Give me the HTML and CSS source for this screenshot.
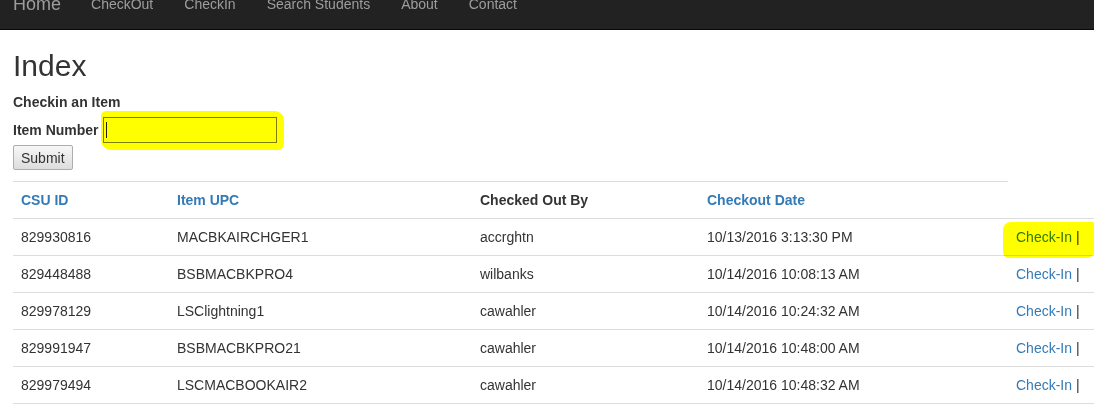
FILE: index.html
```html
<!DOCTYPE html>
<html>
<head>
<meta charset="utf-8">
<title>Index</title>
<link rel="stylesheet" href="styles.css">
</head>
<body>
<nav class="navbar">
  <a class="brand" href="#">Home</a>
  <ul class="nav">
    <li><a href="#">CheckOut</a></li>
    <li><a href="#">CheckIn</a></li>
    <li><a href="#">Search Students</a></li>
    <li><a href="#">About</a></li>
    <li><a href="#">Contact</a></li>
  </ul>
</nav>
<main class="content">
  <h2 class="title">Index</h2>
  <div class="form-title">Checkin an Item</div>
  <div class="form-row">
    <label class="form-label">Item Number</label>
    <div class="input marked-input"><span class="caret"></span></div>
  </div>
  <button class="btn" type="button">Submit</button>
  <div class="rule"></div>
  <table class="table">
    <colgroup>
      <col class="c1"><col class="c2"><col class="c3"><col class="c4"><col class="c5">
    </colgroup>
    <thead>
      <tr>
        <th><a href="#">CSU ID</a></th>
        <th><a href="#">Item UPC</a></th>
        <th>Checked Out By</th>
        <th><a href="#">Checkout Date</a></th>
        <th></th>
      </tr>
    </thead>
    <tbody>
      <tr>
        <td>829930816</td><td>MACBKAIRCHGER1</td><td>accrghtn</td><td>10/13/2016 3:13:30 PM</td>
        <td><span class="marked"><a href="#">Check-In</a> |</span></td>
      </tr>
      <tr>
        <td>829448488</td><td>BSBMACBKPRO4</td><td>wilbanks</td><td>10/14/2016 10:08:13 AM</td>
        <td><a href="#">Check-In</a> |</td>
      </tr>
      <tr>
        <td>829978129</td><td>LSClightning1</td><td>cawahler</td><td>10/14/2016 10:24:32 AM</td>
        <td><a href="#">Check-In</a> |</td>
      </tr>
      <tr>
        <td>829991947</td><td>BSBMACBKPRO21</td><td>cawahler</td><td>10/14/2016 10:48:00 AM</td>
        <td><a href="#">Check-In</a> |</td>
      </tr>
      <tr>
        <td>829979494</td><td>LSCMACBOOKAIR2</td><td>cawahler</td><td>10/14/2016 10:48:32 AM</td>
        <td><a href="#">Check-In</a> |</td>
      </tr>
    </tbody>
  </table>
</main>
</body>
</html>
```
FILE: styles.css
```css
html, body {
  margin: 0;
  padding: 0;
  background: #fff;
  overflow: hidden;
}
body {
  font-family: "Liberation Sans", Arial, Helvetica, sans-serif;
  font-size: 14px;
  line-height: 20px;
  color: #333;
  width: 1094px;
}
a {
  color: #337ab7;
  text-decoration: none;
}

/* navbar */
.navbar {
  display: flex;
  align-items: flex-start;
  height: 50px;
  margin-top: -21px;
  padding-left: 13px;
  background: #222;
  border-bottom: 1px solid #080808;
}
.brand {
  display: block;
  padding: 15px 15px 15px 0;
  font-size: 18px;
  line-height: 20px;
  color: #9d9d9d;
}
.nav {
  display: flex;
  margin: 0;
  padding: 0;
  list-style: none;
}
.nav a {
  display: block;
  padding: 15px 15.5px;
  color: #9d9d9d;
  line-height: 20px;
}
.nav li:first-child a {
  padding-left: 15px;
}

/* content */
.content {
  padding-left: 13px;
}
.title {
  margin: 19px 0 10px;
  font-size: 30px;
  line-height: 33px;
  font-weight: normal;
  color: #333;
}
.form-title {
  font-weight: bold;
}
.form-row {
  display: flex;
  align-items: center;
  margin-top: 5px;
  height: 26px;
}
.form-label {
  font-weight: bold;
  margin-right: 4px;
}
.input {
  position: relative;
  box-sizing: border-box;
  width: 174px;
  height: 26px;
  border: 1px solid #7d7d7d;
  background: #fff;
}
.caret {
  position: absolute;
  left: 2px;
  top: 4px;
  width: 1px;
  height: 16px;
  background: #222;
}
.marked-input::after {
  content: "";
  position: absolute;
  left: -3px;
  top: -7px;
  right: -8px;
  bottom: -8px;
  background: #ffff00;
  mix-blend-mode: multiply;
  border-radius: 5px 9px 6px 10px;
  pointer-events: none;
}
.btn {
  display: block;
  box-sizing: border-box;
  height: 25px;
  margin-top: 2px;
  padding: 0 7px;
  font-family: "Liberation Sans", Arial, sans-serif;
  font-size: 14px;
  color: #333;
  background: linear-gradient(#f7f7f7, #dddddd);
  border: 1px solid #adadad;
  border-radius: 2px;
}
.rule {
  width: 995px;
  margin-top: 11px;
  border-top: 1px solid #ddd;
}

/* table */
.table {
  table-layout: fixed;
  width: 1120px;
  border-collapse: collapse;
  border-spacing: 0;
}
.c1 { width: 156px; }
.c2 { width: 303px; }
.c3 { width: 227px; }
.c4 { width: 309px; }
.c5 { width: 125px; }
.table th,
.table td {
  padding: 8px;
  line-height: 20px;
  text-align: left;
  vertical-align: top;
  border-bottom: 1px solid #ddd;
  white-space: nowrap;
}
.table th {
  font-weight: bold;
}
.marked {
  position: relative;
  display: inline-block;
}
.marked::after {
  content: "";
  position: absolute;
  left: -13px;
  top: -5px;
  right: -16px;
  bottom: -11px;
  background: #ffff00;
  mix-blend-mode: multiply;
  border-radius: 8px 4px 10px 6px;
  pointer-events: none;
}
```
